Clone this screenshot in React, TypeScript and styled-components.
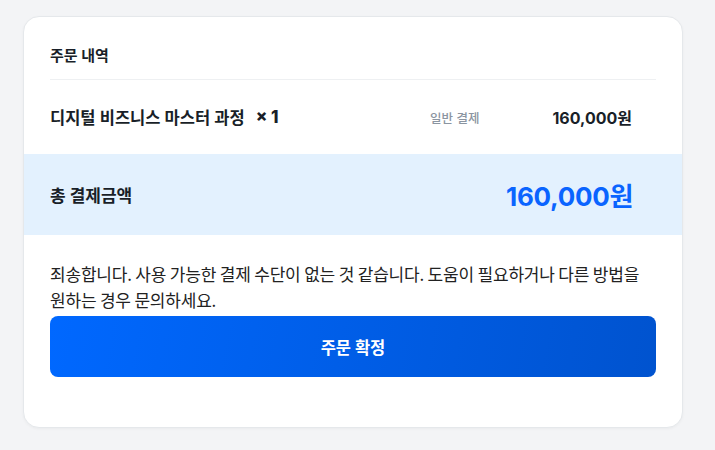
import styled, { createGlobalStyle } from "styled-components";

const GlobalStyle = createGlobalStyle`
    body {
        margin: 0;
        background: #f3f4f6;
        font-family: Inter, "Noto Sans CJK KR", sans-serif;
        color: #191f28;
    }
`;

function App() {
    return (
        <Page>
            <GlobalStyle />
            <Card>
                <Header>
                    <Title>주문 내역</Title>
                </Header>

                <ItemRow>
                    <ItemName>
                        디지털 비즈니스 마스터 과정
                        <Qty>× 1</Qty>
                    </ItemName>
                    <Method>일반 결제</Method>
                    <ItemPrice>160,000원</ItemPrice>
                </ItemRow>

                <TotalBar>
                    <TotalLabel>총 결제금액</TotalLabel>
                    <TotalPrice>160,000원</TotalPrice>
                </TotalBar>

                <Body>
                    <Message>
                        죄송합니다. 사용 가능한 결제 수단이 없는 것 같습니다. 도움이 필요하거나 다른 방법을 원하는 경우 문의하세요.
                    </Message>
                    <ConfirmBtn>주문 확정</ConfirmBtn>
                </Body>
            </Card>
        </Page>
    );
}

// LAYOUT
const Page = styled.div`
    padding: 16px 32px 24px 23px;
`;

const Card = styled.div`
    width: 660px;
    box-sizing: border-box;
    background: #ffffff;
    border: 1px solid #e5e8eb;
    border-radius: 16px;
    box-shadow: 0 1px 3px rgba(0, 0, 0, 0.04);
    overflow: hidden;
`;

// HEADER
const Header = styled.div`
    margin: 0 26px;
    padding: 28px 0 12px;
    border-bottom: 1px solid #eef0f2;
`;

const Title = styled.h2`
    margin: 0;
    font-size: 15px;
    font-weight: 700;
    line-height: 22px;
`;

// ITEM ROW
const ItemRow = styled.div`
    display: flex;
    align-items: center;
    height: 74px;
    padding: 0 50px 0 26px;
`;

const ItemName = styled.div`
    flex: 1;
    font-size: 16.5px;
    font-weight: 600;
    display: flex;
    align-items: center;
`;

const Qty = styled.span`
    margin-left: 11px;
    font-weight: 800;
    font-size: 17px;
`;

const Method = styled.span`
    font-size: 12.5px;
    color: #8b95a1;
    font-weight: 500;
    margin-right: 73px;
`;

const ItemPrice = styled.span`
    font-size: 16px;
    font-weight: 700;
`;

// TOTAL
const TotalBar = styled.div`
    display: flex;
    align-items: center;
    justify-content: space-between;
    height: 81px;
    padding: 0 49px 0 26px;
    background: #e3f1fe;
`;

const TotalLabel = styled.span`
    font-size: 17px;
    font-weight: 700;
`;

const TotalPrice = styled.span`
    font-size: 26px;
    font-weight: 700;
    color: #0a64ff;
    letter-spacing: -0.3px;
`;

// BODY
const Body = styled.div`
    padding: 26px 26px 50px;
`;

const Message = styled.p`
    margin: 0;
    font-size: 17px;
    line-height: 26px;
    color: #222;
    letter-spacing: -0.2px;
    font-family: "Noto Sans CJK KR", sans-serif;
`;

const ConfirmBtn = styled.button`
    display: block;
    width: 100%;
    height: 61px;
    margin-top: 3px;
    border: none;
    border-radius: 8px;
    background: linear-gradient(100deg, #0068ff 0%, #0053cf 100%);
    color: #ffffff;
    font-family: Inter, "Noto Sans CJK KR", sans-serif;
    font-size: 16.5px;
    font-weight: 700;
    cursor: pointer;
`;

export default App;
